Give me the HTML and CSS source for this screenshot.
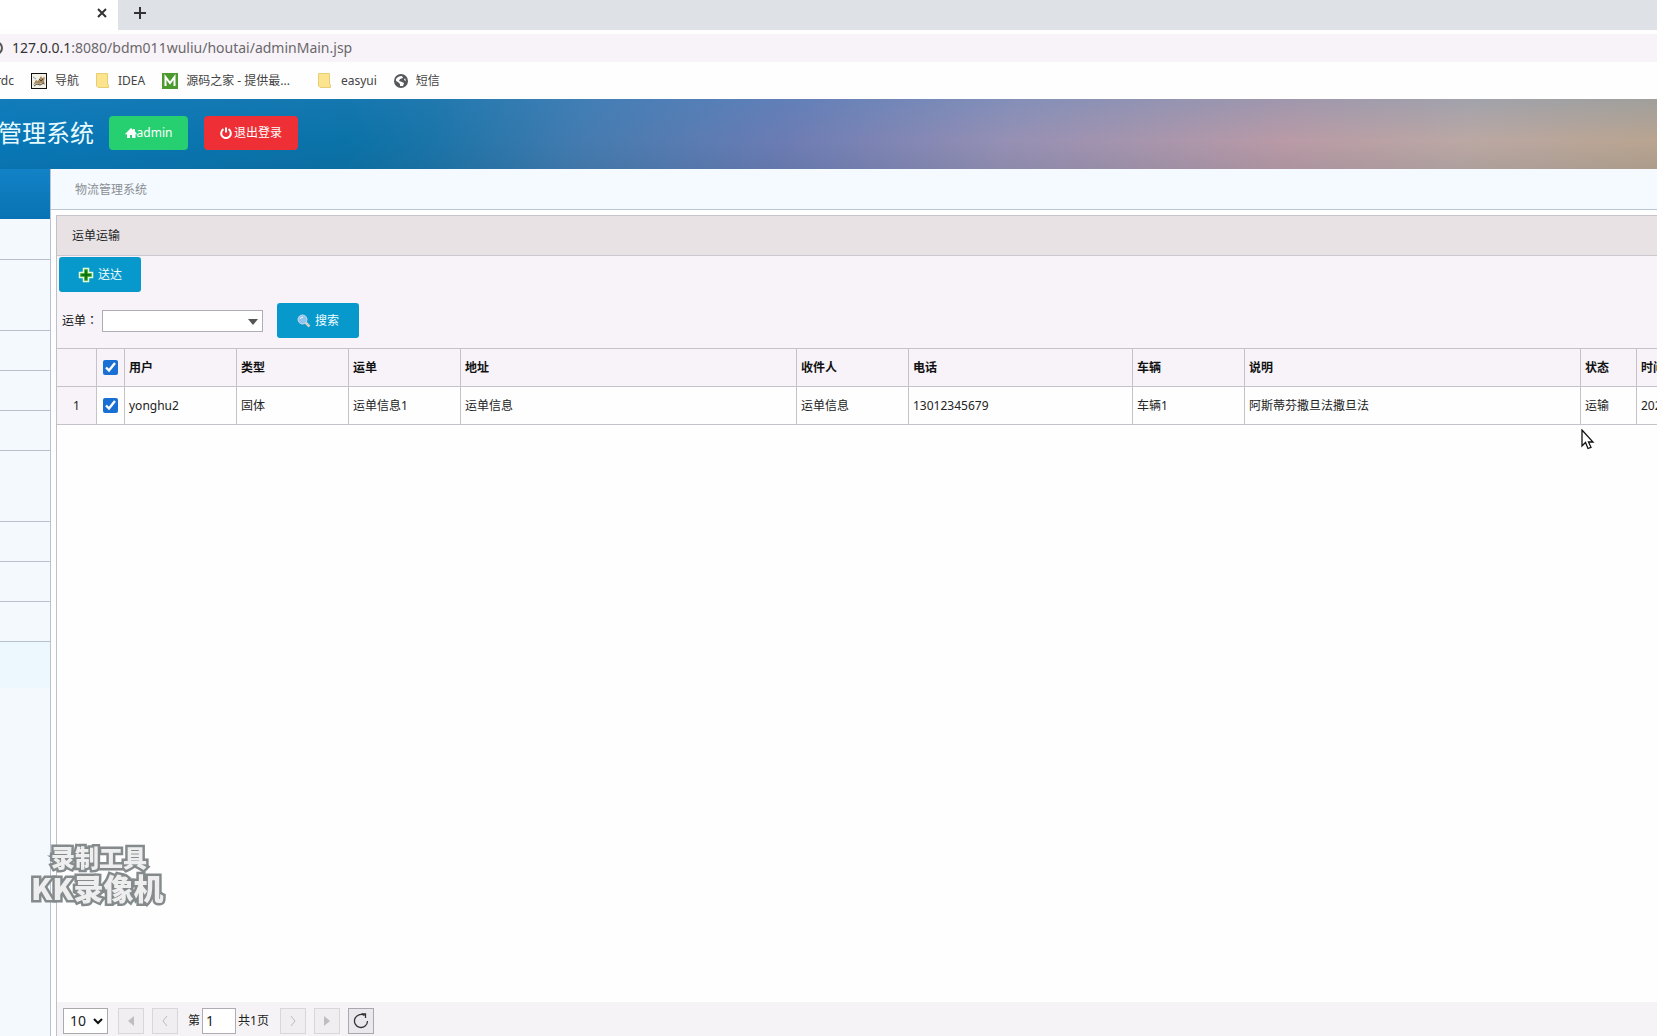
FILE: index.html
```html
<!DOCTYPE html>
<html lang="zh-CN">
<head>
<meta charset="utf-8">
<title>物流管理系统</title>
<link rel="stylesheet" href="styles.css">
</head>
<body>
<div class="tabstrip">
  <div class="tab"><button class="tab-btn" aria-label="关闭"><svg width="10" height="10" viewBox="0 0 10 10"><path d="M1 1l8 8M9 1l-8 8" stroke="#333" stroke-width="2"/></svg></button></div>
  <button class="tab-btn new-tab" aria-label="新标签页"><svg width="12" height="12" viewBox="0 0 12 12"><path d="M6 0v12M0 6h12" stroke="#333" stroke-width="2"/></svg></button>
</div>
<div class="address">
  <svg class="info" width="3" height="14" viewBox="0 0 3 14"><circle cx="-4" cy="7" r="6" fill="none" stroke="#555" stroke-width="2"/></svg>
  <div class="url"><span class="host">127.0.0.1</span>:8080/bdm011wuliu/houtai/adminMain.jsp</div>
</div>
<nav class="bookmarks">
  <a href="#" class="bm-cut">rdc</a>
  <a href="#" class="bm"><svg width="16" height="16" viewBox="0 0 16 16"><rect x=".5" y=".5" width="15" height="15" fill="#f3f0e6" stroke="#111"/><path d="M2 12l3-5 2 1 3-5 1 2 3-1-1 4 1 4-3-2-3 1-2-1z" fill="#a98a5c"/><path d="M3 13l3-2 3 1 4-2M8 6l2 2 2-2" fill="none" stroke="#4c4a48"/><path d="M2 4l3 2" stroke="#7d9fc0"/></svg>导航</a>
  <a href="#" class="bm bm-idea"><svg width="13" height="15" viewBox="0 0 13 15"><path d="M1 .5h10.500v10.500l1 1v2.500H2L.5 13V.5z" fill="#fce38e" stroke="#e9cd74"/></svg>IDEA</a>
  <a href="#" class="bm bm-code"><svg width="16" height="16" viewBox="0 0 16 16"><rect width="16" height="16" fill="#4a9a2e"/><path d="M3.500 13V4l4.500 6 4.500-6v9" fill="none" stroke="#fff" stroke-width="2"/></svg>源码之家 - 提供最...</a>
  <a href="#" class="bm bm-easy"><svg width="13" height="15" viewBox="0 0 13 15"><path d="M1 .5h10.500v10.500l1 1v2.500H2L.5 13V.5z" fill="#fce38e" stroke="#e9cd74"/></svg>easyui</a>
  <a href="#" class="bm"><svg width="14" height="14" viewBox="0 0 14 14"><circle cx="7" cy="7" r="7" fill="#55585c"/><path d="M2 5q2-3 6-3l1 2-3 1-1 2 3 1 2 1-1 3-3 0 0-2-2-2-2-1zM11 4l1 3-2-1z" fill="#fff"/></svg>短信</a>
</nav>
<header class="banner">
  <h1>管理系统</h1>
  <button class="pill admin"><svg width="12" height="10" viewBox="0 0 12 10"><path d="M6 0l2 2V1h2v2.500L12 6l-1 .5-.5-.5v4H7V7H5v3H2V6l-1 .5L0 6z" fill="#fff"/></svg>admin</button>
  <button class="pill logout"><svg width="12" height="12" viewBox="0 0 12 12"><path d="M3.500 2.200a4.800 4.800 0 1 0 5 0M6 .5v5" fill="none" stroke="#fff" stroke-width="2"/></svg>退出登录</button>
</header>
<div class="body">
  <aside class="side">
    <div class="side-head"></div>
    <div class="item"></div><div class="item tall"></div><div class="item"></div><div class="item"></div><div class="item"></div><div class="item tall"></div><div class="item"></div><div class="item"></div><div class="item"></div>
    <div class="side-glow"></div>
  </aside>
  <main class="main">
    <div class="crumb">物流管理系统</div>
    <section class="panel">
      <h2>运单运输</h2>
      <div class="tools">
        <button class="act"><svg width="16" height="16" viewBox="0 0 16 16"><path d="M5.500 1.500h5v4h4v5h-4v4h-5v-4h-4v-5h4z" fill="#2b9a22" stroke="#e4ffd8" stroke-width="1.500"/><path d="M8 3.500v9M3.500 8h9" stroke="#0d6b12" stroke-width="1.500"/></svg>送达</button>
        <div class="query">
          <label for="bill">运单<span class="colon" lang="zh-TW">：</span></label>
          <div class="combo"><select id="bill"><option></option></select><svg width="10" height="6" viewBox="0 0 10 6"><path d="M0 0h10L5 6z" fill="#555"/></svg></div>
          <button class="act"><svg width="14" height="14" viewBox="0 0 14 14"><path d="M8.500 8.500l4 4" stroke="#d8cfc4" stroke-width="2.500"/><circle cx="5.500" cy="5.500" r="4.500" fill="#8fc4ee" stroke="#c5daf0"/><path d="M3 5q1-2 3-2" fill="none" stroke="#fff"/></svg>搜索</button>
        </div>
      </div>
      <table class="grid">
        <colgroup><col class="c-no"><col class="c-ck"><col class="c-s"><col class="c-s"><col class="c-s"><col class="c-l"><col class="c-s"><col class="c-m"><col class="c-s"><col class="c-l"><col class="c-st"><col></colgroup>
        <thead><tr><th></th><th class="ck"><input type="checkbox" aria-label="全选" checked></th><th>用户</th><th>类型</th><th>运单</th><th>地址</th><th>收件人</th><th>电话</th><th>车辆</th><th>说明</th><th>状态</th><th>时间</th></tr></thead>
        <tbody><tr><td class="no">1</td><td class="ck"><input type="checkbox" aria-label="选择第1行" checked></td><td>yonghu2</td><td>固体</td><td>运单信息1</td><td>运单信息</td><td>运单信息</td><td>13012345679</td><td>车辆1</td><td>阿斯蒂芬撒旦法撒旦法</td><td>运输</td><td>202</td></tr></tbody>
      </table>
      <div class="pager">
        <div class="size"><select aria-label="每页条数"><option>10</option></select><svg width="10" height="7" viewBox="0 0 10 7"><path d="M1 1l4 4 4-4" fill="none" stroke="#111" stroke-width="2"/></svg></div>
        <button class="pg" aria-label="首页" disabled><svg width="8" height="12" viewBox="0 0 8 12"><path d="M7 1v10L1 6z" fill="#c0bdc0"/></svg></button>
        <button class="pg" aria-label="上一页" disabled><svg width="8" height="12" viewBox="0 0 8 12"><path d="M6 1L2 6l4 5" fill="none" stroke="#bbb"/></svg></button>
        <div class="page"><label for="page">第</label><input id="page" type="text" value="1"><span>共1页</span></div>
        <button class="pg" aria-label="下一页" disabled><svg width="8" height="12" viewBox="0 0 8 12"><path d="M2 1l4 5-4 5" fill="none" stroke="#bbb"/></svg></button>
        <button class="pg" aria-label="末页" disabled><svg width="8" height="12" viewBox="0 0 8 12"><path d="M1 1v10l6-5z" fill="#c0bdc0"/></svg></button>
        <button class="pg on" aria-label="刷新"><svg width="16" height="16" viewBox="0 0 16 16"><path d="M11.500 2.500A6.500 6.500 0 1 0 14.500 8M8.500 1h4v4" fill="none" stroke="#333" stroke-width="1.300"/></svg></button>
      </div>
    </section>
  </main>
</div>
<div class="mark"><div class="mark-a">录制工具</div><div class="mark-b">KK录像机</div></div>
<svg class="cursor" width="14" height="21" viewBox="0 0 14 21"><path d="M1 1v16l3.500-3.500L7 19.500l3-1.200-2.500-5.300H12z" fill="#fff" stroke="#111" stroke-width="1.300"/></svg>
</body>
</html>
```
FILE: styles.css
```css
* { box-sizing: border-box; }
body {
  margin: 0;
  min-height: 100vh;
  display: flex;
  flex-direction: column;
  overflow: hidden;
  background: #fefefe;
  color: #222;
  font: 12px/20px "Noto Sans", "Noto Sans CJK SC", sans-serif;
}
button, input, select { font: inherit; color: inherit; margin: 0; }
button { border: 0; padding: 0; background: none; display: flex; align-items: center; justify-content: center; }
svg { display: block; flex: none; }

.tabstrip { display: flex; height: 30px; background: #dee1e5; }
.tab { width: 118px; background: #fff; display: flex; justify-content: flex-end; padding-right: 8px; }
.tab-btn { width: 16px; height: 26px; }
.new-tab { margin-left: 14px; }

.address { display: flex; align-items: center; gap: 9px; height: 28px; margin-top: 4px; background: #f8f3f8; }
.url { font-size: 14px; color: #6a686c; }
.host { color: #333; }

.bookmarks { display: flex; align-items: center; height: 37px; color: #444; }
.bookmarks a { color: inherit; text-decoration: none; white-space: nowrap; }
.bm-cut { width: 14px; margin-right: 17px; display: flex; justify-content: flex-end; }
.bm { display: flex; align-items: center; gap: 8px; margin-right: 17px; }
.bm-idea { gap: 9px; }
.bm-code { margin-right: 28px; }
.bm-easy { gap: 10px; }

.banner {
  display: flex;
  align-items: center;
  height: 70px;
  padding-bottom: 2px;
  background:
    linear-gradient(180deg, rgba(60, 140, 200, .2), rgba(60, 100, 150, 0) 60%, rgba(20, 60, 80, .08)),
    linear-gradient(100deg, #0878b8 0, #0b72a8 350px, #1a74a8 430px, #447bb0 580px, #6c7cb4 780px, #9690b4 1000px, #b99aa6 1270px, #bba8a4 1450px, #b9a48f 100%);
}
.banner h1 { margin: 0 15px 0 -2px; font-size: 24px; line-height: 36px; font-weight: 400; color: #e8fbff; }
.pill { height: 34px; border-radius: 4px; color: #fff; }
.admin { width: 79px; margin-right: 16px; background: #26cf70; }
.logout { width: 94px; gap: 2px; background: #ee3036; }

.body { flex: 1; display: flex; }
.side { width: 51px; flex: none; border-right: 1px solid #b9c4d2; background: #f4f9fe; }
.side-head { height: 50px; margin-bottom: 1px; background: linear-gradient(#1382c6, #0873b4); }
.item { height: 40px; border-bottom: 1px solid #b9c0cc; }
.tall { height: 71px; }
.side-glow { height: 46px; background: #edf8fe; }

.main { flex: 1; min-width: 0; display: flex; flex-direction: column; }
.crumb { height: 41px; padding: 11px 24px 0; background: #f4faff; border-bottom: 1px solid #b9c8d4; color: #8a8f94; }
.panel { flex: 1; display: flex; flex-direction: column; margin: 5px 0 0 5px; border-top: 1px solid #c8c4ca; border-left: 1px solid #c0c0c8; }
.panel h2 { margin: 0; height: 40px; padding: 10px 15px; font-size: 12px; line-height: 20px; font-weight: 400; background: #e8e2e5; border-bottom: 1px solid #cbc8cf; }
.tools { height: 92px; padding: 1px 2px; background: #f7f3f9; }
.act { width: 82px; height: 35px; gap: 4px; border-radius: 3px; background: #0798cc; color: #f2feff; }
.query { display: flex; align-items: center; padding: 11px 0 0 3px; }
.query label { width: 40px; white-space: nowrap; color: #111; }
.colon { font-family: "Noto Sans CJK TC", sans-serif; }
.combo { position: relative; width: 161px; margin-right: 14px; }
.combo select { display: block; width: 100%; height: 22px; border: 1px solid #b0acb4; border-radius: 0; background: #fff; appearance: none; }
.combo svg { position: absolute; right: 5px; top: 9px; pointer-events: none; }

.grid { width: 100%; table-layout: fixed; border-collapse: separate; border-spacing: 0; border-top: 1px solid #c5c2ca; }
.grid th, .grid td { height: 38px; padding: 0 4px; border-right: 1px solid #c5c2ca; border-bottom: 1px solid #c5c2ca; text-align: left; white-space: nowrap; overflow: hidden; }
.grid th:last-child, .grid td:last-child { border-right: 0; padding-right: 0; }
.grid th { background: #f7f3f9; color: #111; font-weight: 700; }
.grid .no { background: #f7f3f9; text-align: center; }
.grid .ck { padding: 0; text-align: center; }
.ck input { display: block; width: 15px; height: 15px; margin: 0 auto; accent-color: #1a70d2; }
.c-no { width: 40px; }
.c-ck { width: 28px; }
.c-s { width: 112px; }
.c-m { width: 224px; }
.c-l { width: 336px; }
.c-st { width: 56px; }

.pager { display: flex; align-items: center; gap: 8px; height: 34px; margin-top: auto; padding: 4px 6px 0; background: #f5f3f6; }
.size { position: relative; width: 45px; margin-right: 2px; }
.size select { display: block; width: 100%; height: 26px; padding: 0 6px; border: 1px solid #aaa; border-radius: 0; background: #fff; font-size: 14px; appearance: none; }
.size svg { position: absolute; right: 5px; top: 10px; pointer-events: none; }
.pg { width: 26px; height: 26px; border: 1px solid #d9d6da; background: #f0eef1; }
.on { border-color: #aaa8ae; background: #eae8ec; }
.page { display: flex; align-items: center; width: 84px; margin: 0 0 0 2px; white-space: nowrap; }
.page label { flex: none; padding-right: 2px; }
.page input { flex: none; width: 34px; height: 26px; margin-right: 2px; padding: 0 3px 2px; border: 1px solid #b0acb4; background: #fff; font-size: 14px; }
.page span { flex: none; }

.mark { position: fixed; left: 31px; bottom: 134px; color: #eee; font-family: "Noto Sans CJK SC", sans-serif; font-weight: 900; -webkit-text-stroke: 5px #858b8c; paint-order: stroke fill; white-space: nowrap; }
.mark-a { padding-left: 20px; font-size: 24px; line-height: 30px; }
.mark-b { font-size: 30px; line-height: 30px; }
.cursor { position: fixed; left: 1581px; top: 429px; }
```
